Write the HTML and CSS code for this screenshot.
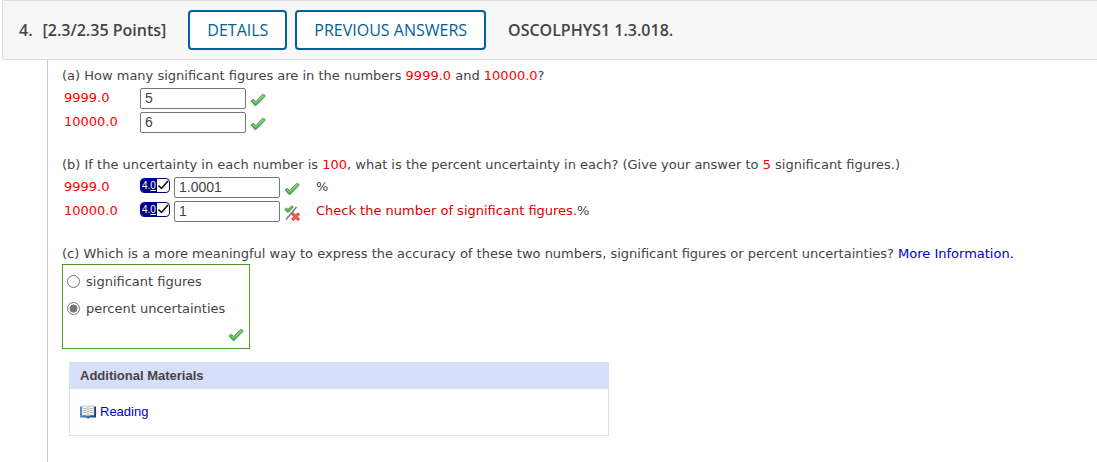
FILE: index.html
```html
<!DOCTYPE html>
<html lang="en">
<head>
<meta charset="utf-8">
<title>OSCOLPHYS1 1.3.018.</title>
<link rel="stylesheet" href="styles.css">
</head>
<body>
<svg class="defs" aria-hidden="true">
  <defs>
    <linearGradient id="green" x1="0" y1="0" x2="0" y2="1"><stop offset="0" stop-color="#7fd07a"/><stop offset="1" stop-color="#48a348"/></linearGradient>
    <linearGradient id="blue" x1="0" y1="0" x2="1" y2="0"><stop offset="0" stop-color="#4a94cc"/><stop offset="1" stop-color="#123f70"/></linearGradient>
    <symbol id="check" viewBox="0 0 16 14">
      <path d="M1 8 L3 6.2 L5.8 8.4 L12.4 1.4 L15 2.2 L15 3.4 L6 12.6 L5 12.6 Z" fill="url(#green)" stroke="#3f8f45" stroke-width=".8" stroke-linejoin="round"/>
      <path d="M3 7.6 L5.6 9.8 L13 2.8" fill="none" stroke="#83cc7d" stroke-width="1.2"/>
    </symbol>
    <symbol id="partial" viewBox="0 0 16 16">
      <path d="M.8 4.5 L2.5 3 L4 4.4 L8 .8 L9.4 2 L4.4 7.4 L3.6 7.4 Z" fill="#5bb55b" stroke="#3f8f45" stroke-width=".8"/>
      <path d="M2 14.5 L12.5 2" stroke="#777" stroke-width="1.4"/>
      <path d="M8.2 8.4 L15 15 M15 8.4 L8.2 15" stroke="#e33a3a" stroke-width="3"/>
      <path d="M9 9.2 L14.2 14.2 M14.2 9.2 L9 14.2" stroke="#ff6a66" stroke-width="1.2"/>
    </symbol>
    <symbol id="tick" viewBox="0 0 12 12"><path d="M1.5 6.5 L4.5 9.5 L11 2" fill="none" stroke="#000" stroke-width="1.5"/></symbol>
  </defs>
</svg>

<header class="question-header">
  <span class="number">4.</span>
  <span class="points">[2.3/2.35 Points]</span>
  <button type="button" class="action">DETAILS</button>
  <button type="button" class="action">PREVIOUS ANSWERS</button>
  <h1 class="code">OSCOLPHYS1 1.3.018.</h1>
</header>

<main class="question">
  <section class="part">
    <p class="prompt">(a) How many significant figures are in the numbers <span class="value">9999.0</span> and <span class="value">10000.0</span>?</p>
    <div class="row">
      <label class="value" for="a1">9999.0</label>
      <input class="answer" id="a1" type="text" value="5">
      <svg class="mark" role="img" aria-label="Correct"><use href="#check"/></svg>
    </div>
    <div class="row">
      <label class="value" for="a2">10000.0</label>
      <input class="answer" id="a2" type="text" value="6">
      <svg class="mark" role="img" aria-label="Correct"><use href="#check"/></svg>
    </div>
  </section>

  <section class="part">
    <p class="prompt">(b) If the uncertainty in each number is <span class="value">100</span>, what is the percent uncertainty in each? (Give your answer to <span class="value">5</span> significant figures.)</p>
    <div class="row">
      <label class="value" for="b1">9999.0</label>
      <span class="sigfig"><span class="digits">4.<u>0</u></span><svg class="tick"><use href="#tick"/></svg></span>
      <input class="answer" id="b1" type="text" value="1.0001">
      <svg class="mark" role="img" aria-label="Correct"><use href="#check"/></svg>
      <span class="unit">%</span>
    </div>
    <div class="row">
      <label class="value" for="b2">10000.0</label>
      <span class="sigfig"><span class="digits">4.<u>0</u></span><svg class="tick"><use href="#tick"/></svg></span>
      <input class="answer" id="b2" type="text" value="1">
      <svg class="mark partial" role="img" aria-label="Partially correct"><use href="#partial"/></svg>
      <span class="unit"><span class="warning">Check the number of significant figures.</span>%</span>
    </div>
  </section>

  <section class="part">
    <p class="prompt">(c) Which is a more meaningful way to express the accuracy of these two numbers, significant figures or percent uncertainties? <a href="#">More Information.</a></p>
    <div class="choices">
      <label class="choice"><input type="radio" name="c"> significant figures</label>
      <label class="choice"><input type="radio" name="c" checked> percent uncertainties</label>
      <svg class="mark" role="img" aria-label="Correct"><use href="#check"/></svg>
    </div>
  </section>

  <aside class="materials">
    <h2>Additional Materials</h2>
    <a class="reading" href="#">
      <svg class="book" viewBox="0 0 16 14" aria-hidden="true">
        <path d="M0 1.5 H16 V12.5 H10 L8 13.8 L6 12.5 H0 Z" fill="url(#blue)"/>
        <path d="M2 1 Q5 0 8 1.6 Q11 0 14 1 V10.3 Q11 9.6 8 11 Q5 9.6 2 10.3 Z" fill="#f6f4ee" stroke="#aaa9a4" stroke-width=".5"/>
        <path d="M8 2 V11 M3.5 3.5 H6.5 M3.5 5.5 H6.5 M3.5 7.5 H6.5 M9.5 3.5 H12.5 M9.5 5.5 H12.5 M9.5 7.5 H12.5" stroke="#a5a5a5" stroke-width=".8"/>
      </svg>
      <span>Reading</span>
    </a>
  </aside>
</main>
</body>
</html>
```
FILE: styles.css
```css
* { box-sizing: border-box; }

body {
  margin: 0;
  min-height: 100vh;
  display: flex;
  flex-direction: column;
  background: #fff;
  color: #444;
  font: 13px/20px Verdana, "DejaVu Sans", sans-serif;
}

.defs { position: absolute; width: 0; height: 0; }

a { color: #0000c8; text-decoration: none; }

.question-header {
  display: flex;
  align-items: center;
  margin-left: 2px;
  padding: 9px 16px;
  background: #f7f7f7;
  border: 1px solid #ddd;
  border-right: 0;
  border-radius: 2px 0 0 2px;
  font: 600 16px/20px "Open Sans", sans-serif;
}

.number { margin-right: 10px; }
.points { margin-right: 22px; }

.action {
  height: 40px;
  margin-right: 8px;
  padding: 0 17px;
  background: #fff;
  border: 2px solid #006298;
  border-radius: 4px;
  color: #006298;
  font: 16px/20px "Open Sans", sans-serif;
}

.code { margin: 0 0 0 14px; font: inherit; }

.question {
  flex: 1;
  margin-left: 47px;
  padding: 6px 14px 26px;
  border-left: 1px solid #ccc;
}

.part { margin-bottom: 21px; }
.prompt { margin: 0; }
.value { color: #f00; }
.warning { color: #d80000; }

.row {
  display: flex;
  align-items: center;
  min-height: 24px;
  padding-left: 2px;
}

.row label { width: 76px; }

.answer {
  width: 106px;
  height: 21px;
  padding: 1px 4px;
  border: 1px solid #767676;
  border-radius: 2px;
  background: #fff;
  color: #444;
  font: 14px/17px "Liberation Sans", Arial, sans-serif;
}

.mark { width: 16px; height: 14px; margin: 3px 0 0 4px; }
.partial { height: 16px; }
.unit { margin-left: 16px; }

.sigfig {
  display: flex;
  align-items: center;
  width: 30px;
  height: 15px;
  margin: 0 4px 4px 0;
  border: 1px solid #00008b;
  border-radius: 4px;
  overflow: hidden;
}

.digits {
  width: 16px;
  padding-left: 1px;
  background: #00008b;
  color: #fff;
  font: 10px/13px "Liberation Sans", Arial, sans-serif;
}

.tick { width: 12px; height: 12px; }

.choices {
  display: flex;
  flex-direction: column;
  width: 188px;
  padding: 3px 4px 6px;
  border: 1px solid #4f9a2a;
}

.choice { display: flex; align-items: center; gap: 6px; height: 27px; }
.choice input { width: 13px; height: 13px; margin: 0; accent-color: #767676; }
.choices .mark { align-self: flex-end; margin: 6px 1px 0 0; }

.part:last-of-type { margin-bottom: 13px; }

.materials {
  max-width: 540px;
  margin-left: 7px;
  border: 1px solid #d7def7;
  font: 13px/20px "Liberation Sans", Arial, sans-serif;
}

.materials h2 {
  margin: 0;
  padding: 3px 10px;
  background: #d7def7;
  font: bold 13px/20px "Liberation Sans", Arial, sans-serif;
}

.reading { display: flex; align-items: center; gap: 4px; padding: 13px 10px; }
.book { width: 16px; height: 14px; }
```
